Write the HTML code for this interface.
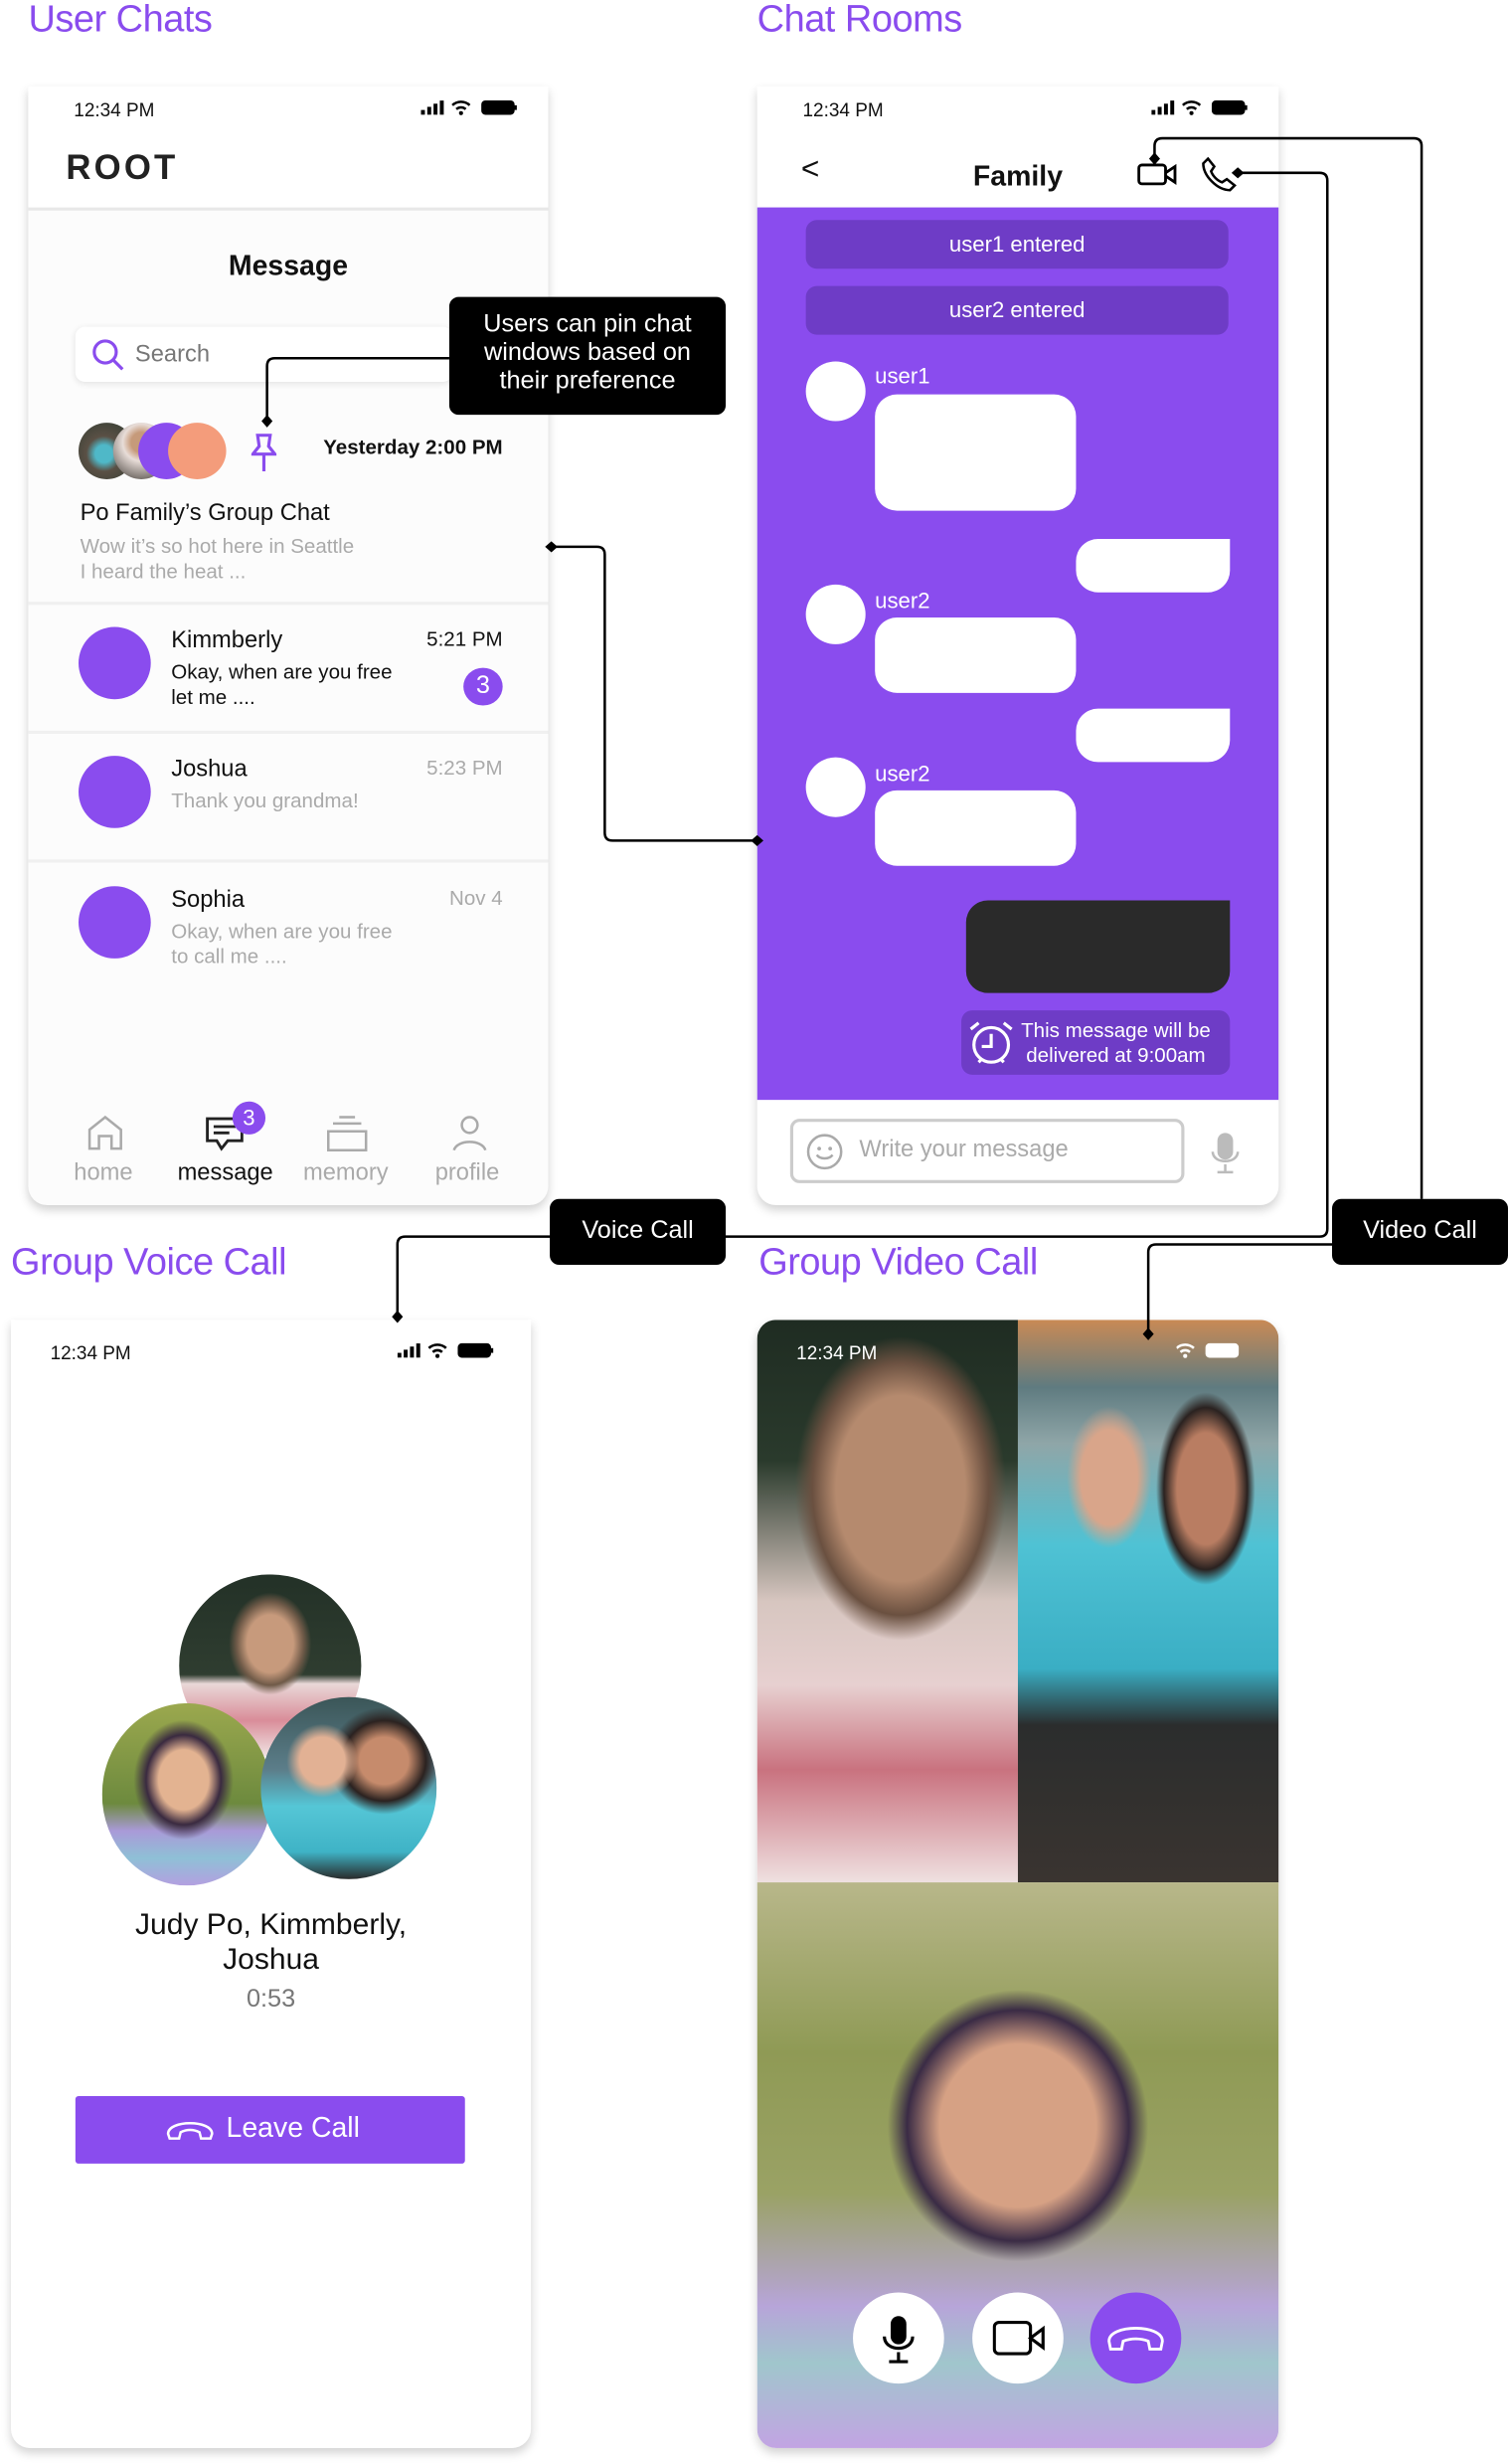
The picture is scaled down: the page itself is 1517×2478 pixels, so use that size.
<!DOCTYPE html>
<html><head><meta charset="utf-8">
<style>
*{margin:0;padding:0;box-sizing:border-box}
html,body{width:1517px;height:2478px;overflow:hidden;background:#fff}
#w{position:absolute;left:0;top:0;width:960px;height:1568px;transform:scale(1.5802);transform-origin:0 0;font-family:"Liberation Sans",sans-serif;color:#111}
.a{position:absolute}
.t{position:absolute;white-space:nowrap}
.title{font-size:24px;color:#8a4cee;font-weight:500;letter-spacing:-.3px}
.phone{position:absolute;background:#fff;box-shadow:0 3px 6px rgba(0,0,0,.18);border-radius:0 0 12px 12px}
.tip{position:absolute;background:#000;color:#fff;border-radius:6px;text-align:center;font-size:16px}
.circ{position:absolute;border-radius:50%}
.gray{color:#aaa}
.row{position:absolute;left:0;width:331px;height:1px;background:#eee}
.ban{position:absolute;left:31px;width:269px;height:31px;background:#6e3cc6;border-radius:7px;color:#fff;font-size:14px;text-align:center;line-height:31px}
.wb{position:absolute;background:#fff;border-radius:14px}
</style></head><body><div id="w">

<div class="t title" style="left:18px;top:-1px">User Chats</div>
<div class="t title" style="left:482px;top:-1px">Chat Rooms</div>
<div class="t title" style="left:7px;top:790px">Group Voice Call</div>
<div class="t title" style="left:483px;top:790px">Group Video Call</div>

<!-- Phone 1 -->
<div class="phone" style="left:18px;top:55px;width:331px;height:712px;background:#fcfcfc">
 <div class="a" style="left:0;top:0;width:331px;height:77px;background:#fff"></div>
 <div class="t" style="left:29px;top:8px;font-size:12px">12:34 PM</div>
 <svg class="a" style="left:250px;top:8px" width="62" height="12" viewBox="0 0 62 12"><rect x="0" y="7" width="2.5" height="3"/><rect x="4" y="5" width="2.5" height="5"/><rect x="8" y="3" width="2.5" height="7"/><rect x="12" y="1" width="2.5" height="9"/><path d="M20 4a8 8 0 0 1 11 0M22.5 6.5a4.5 4.5 0 0 1 6 0" stroke="#000" stroke-width="1.6" fill="none"/><circle cx="25.5" cy="9" r="1.3"/><rect x="39" y="1.5" width="20" height="8" rx="2" stroke="#000" stroke-width="1.2" fill="#000"/><rect x="59.5" y="4" width="1.5" height="3"/></svg>
 <div class="t" style="left:24px;top:39px;font-size:22px;font-weight:bold;letter-spacing:2px;color:#222">ROOT</div>
 <div class="a" style="left:0;top:77px;width:331px;height:2px;background:#e8e8e8"></div>
 <div class="t" style="left:0;width:331px;text-align:center;top:104px;font-size:18px;font-weight:bold">Message</div>
 <div class="a" style="left:30px;top:153px;width:240px;height:35px;background:#fff;border-radius:6px;box-shadow:0 1px 4px rgba(0,0,0,.1)"></div>
 <svg class="a" style="left:40px;top:160px" width="22" height="22" viewBox="0 0 22 22"><circle cx="9" cy="9" r="7" stroke="#8a4cee" stroke-width="2" fill="none"/><path d="M14 14l6 6" stroke="#8a4cee" stroke-width="2"/></svg>
 <div class="t" style="left:68px;top:162px;font-size:15px;color:#777">Search</div>
 <div class="circ" style="left:32px;top:214px;width:36px;height:36px;background:radial-gradient(circle at 45% 55%,#4fb8c8 0 20%,#5a5045 40%,#2d3a30)"></div>
 <div class="circ" style="left:54px;top:214px;width:36px;height:36px;background:radial-gradient(circle at 50% 35%,#c69a7a 0 22%,#e8ddd8 40%,#3a3530)"></div>
 <div class="circ" style="left:70px;top:214px;width:36px;height:36px;background:#8a4cee"></div>
 <div class="circ" style="left:89px;top:214px;width:37px;height:36px;background:#f49c7b"></div>
 <svg class="a" style="left:142px;top:221px" width="16" height="25" viewBox="0 0 16 25"><path d="M4 1h8l-1 7 4 5H1l4-5z M8 13v11" stroke="#8a4cee" stroke-width="2" fill="none"/></svg>
 <div class="t" style="right:29px;top:222px;font-size:13px;font-weight:bold">Yesterday 2:00 PM</div>
 <div class="t" style="left:33px;top:263px;font-size:15px;font-weight:500">Po Family’s Group Chat</div>
 <div class="t gray" style="left:33px;top:285px;font-size:13px;line-height:16px">Wow it’s so hot here in Seattle<br>I heard the heat ...</div>
 <div class="row" style="top:328px;height:2px;background:#f0f0f0"></div>
 <div class="circ" style="left:32px;top:344px;width:46px;height:46px;background:#8a4cee"></div>
 <div class="t" style="left:91px;top:344px;font-size:15px;font-weight:500">Kimmberly</div>
 <div class="t" style="left:91px;top:365px;font-size:13px;line-height:16px">Okay, when are you free<br>let me ....</div>
 <div class="t" style="right:29px;top:344px;font-size:13px">5:21 PM</div>
 <div class="circ" style="left:277px;top:370px;width:25px;height:24px;background:#8a4cee;color:#fff;font-size:16px;text-align:center;line-height:24px">3</div>
 <div class="row" style="top:410px;height:2px;background:#f0f0f0"></div>
 <div class="circ" style="left:32px;top:426px;width:46px;height:46px;background:#8a4cee"></div>
 <div class="t" style="left:91px;top:426px;font-size:15px;font-weight:500">Joshua</div>
 <div class="t gray" style="left:91px;top:447px;font-size:13px">Thank you grandma!</div>
 <div class="t gray" style="right:29px;top:426px;font-size:13px">5:23 PM</div>
 <div class="row" style="top:492px;height:2px;background:#f0f0f0"></div>
 <div class="circ" style="left:32px;top:509px;width:46px;height:46px;background:#8a4cee"></div>
 <div class="t" style="left:91px;top:509px;font-size:15px;font-weight:500">Sophia</div>
 <div class="t gray" style="left:91px;top:530px;font-size:13px;line-height:16px">Okay, when are you free<br>to call me ....</div>
 <div class="t gray" style="right:29px;top:509px;font-size:13px">Nov 4</div>
 <svg class="a" style="left:37px;top:654px" width="24" height="24" viewBox="0 0 24 24"><path d="M2 22V10l10-8 10 8v12h-6v-8H8v8z" stroke="#aaa" stroke-width="1.6" fill="none"/></svg>
 <svg class="a" style="left:113px;top:655px" width="26" height="24" viewBox="0 0 26 24"><path d="M1 2h22v14H14l-4 5-3-5H1z M5 7h14M5 11h10" stroke="#222" stroke-width="1.8" fill="none"/></svg>
 <div class="circ" style="left:130px;top:646px;width:21px;height:21px;background:#8a4cee;color:#fff;font-size:14px;text-align:center;line-height:21px">3</div>
 <svg class="a" style="left:190px;top:655px" width="26" height="24" viewBox="0 0 26 24"><path d="M8 1h10M4 5h18M1 10h24v12H1z" stroke="#aaa" stroke-width="1.6" fill="none"/></svg>
 <svg class="a" style="left:269px;top:654px" width="24" height="24" viewBox="0 0 24 24"><circle cx="12" cy="7" r="5" stroke="#aaa" stroke-width="1.6" fill="none"/><path d="M2 23c2-7 18-7 20 0" stroke="#aaa" stroke-width="1.6" fill="none"/></svg>
 <div class="t gray" style="left:29px;top:683px;font-size:15px">home</div>
 <div class="t" style="left:95px;top:683px;font-size:15px;color:#111">message</div>
 <div class="t gray" style="left:175px;top:683px;font-size:15px">memory</div>
 <div class="t gray" style="left:259px;top:683px;font-size:15px">profile</div>
</div>

<!-- Phone 2 -->
<div class="phone" style="left:482px;top:55px;width:332px;height:712px;overflow:hidden">
 <div class="t" style="left:29px;top:8px;font-size:12px">12:34 PM</div>
 <svg class="a" style="left:251px;top:8px" width="62" height="12" viewBox="0 0 62 12"><rect x="0" y="7" width="2.5" height="3"/><rect x="4" y="5" width="2.5" height="5"/><rect x="8" y="3" width="2.5" height="7"/><rect x="12" y="1" width="2.5" height="9"/><path d="M20 4a8 8 0 0 1 11 0M22.5 6.5a4.5 4.5 0 0 1 6 0" stroke="#000" stroke-width="1.6" fill="none"/><circle cx="25.5" cy="9" r="1.3"/><rect x="39" y="1.5" width="20" height="8" rx="2" stroke="#000" stroke-width="1.2" fill="#000"/><rect x="59.5" y="4" width="1.5" height="3"/></svg>
 <div class="t" style="left:28px;top:42px;font-size:20px">&lt;</div>
 <div class="t" style="left:0;width:332px;text-align:center;top:47px;font-size:18px;font-weight:bold">Family</div>
 <svg class="a" style="left:242px;top:46px" width="26" height="18" viewBox="0 0 26 18"><rect x="1" y="4" width="17" height="12" rx="2" stroke="#000" stroke-width="1.8" fill="none"/><path d="M18 9l6-4v10l-6-4" stroke="#000" stroke-width="1.8" fill="none"/></svg>
 <svg class="a" style="left:282px;top:44px" width="24" height="24" viewBox="0 0 24 24"><path d="M5 2l4 5-2 3c1 3 4 6 7 7l3-2 5 4-3 3C11 22 2 13 2 5z" stroke="#000" stroke-width="1.6" fill="none"/></svg>
 <div class="a" style="left:0;top:77px;width:332px;height:568px;background:#8a4cee"></div>
 <div class="ban" style="top:85px">user1 entered</div>
 <div class="ban" style="top:127px">user2 entered</div>
 <div class="circ" style="left:31px;top:175px;width:38px;height:38px;background:#fff"></div>
 <div class="t" style="left:75px;top:176px;font-size:14px;color:#fff">user1</div>
 <div class="wb" style="left:75px;top:196px;width:128px;height:74px"></div>
 <div class="wb" style="left:203px;top:288px;width:98px;height:34px;border-radius:14px 0 14px 14px"></div>
 <div class="circ" style="left:31px;top:317px;width:38px;height:38px;background:#fff"></div>
 <div class="t" style="left:75px;top:319px;font-size:14px;color:#fff">user2</div>
 <div class="wb" style="left:75px;top:338px;width:128px;height:48px"></div>
 <div class="wb" style="left:203px;top:396px;width:98px;height:34px;border-radius:14px 0 14px 14px"></div>
 <div class="circ" style="left:31px;top:427px;width:38px;height:38px;background:#fff"></div>
 <div class="t" style="left:75px;top:429px;font-size:14px;color:#fff">user2</div>
 <div class="wb" style="left:75px;top:448px;width:128px;height:48px"></div>
 <div class="a" style="left:133px;top:518px;width:168px;height:59px;background:#2a2a2a;border-radius:14px 0 14px 14px"></div>
 <div class="a" style="left:130px;top:588px;width:171px;height:41px;background:#6e3cc6;border-radius:7px"></div>
 <svg class="a" style="left:133px;top:593px" width="32" height="32" viewBox="0 0 32 32"><circle cx="16" cy="17" r="11" stroke="#fff" stroke-width="2" fill="none"/><path d="M16 10v8h-6M3 7l5-4M29 7l-5-4M8 28l2-2M24 28l-2-2" stroke="#fff" stroke-width="2" fill="none"/></svg>
 <div class="t" style="left:168px;top:593px;font-size:13px;color:#fff;line-height:16px;text-align:center">This message will be<br>delivered at 9:00am</div>
 <div class="a" style="left:21px;top:657px;width:251px;height:41px;border:2px solid #ccc;border-radius:6px"></div>
 <svg class="a" style="left:31px;top:666px" width="24" height="24" viewBox="0 0 24 24"><circle cx="12" cy="12" r="10.5" stroke="#aaa" stroke-width="1.6" fill="none"/><circle cx="8.5" cy="10" r="1.2" fill="#aaa"/><circle cx="15.5" cy="10" r="1.2" fill="#aaa"/><path d="M7 14c2 3 8 3 10 0" stroke="#aaa" stroke-width="1.6" fill="none"/></svg>
 <div class="t" style="left:65px;top:668px;font-size:15px;color:#aaa">Write your message</div>
 <svg class="a" style="left:288px;top:665px" width="20" height="28" viewBox="0 0 20 28"><rect x="5" y="1" width="10" height="17" rx="5" fill="#bbb"/><path d="M2 13c0 8 16 8 16 0M10 21v5M5 26h10" stroke="#bbb" stroke-width="1.6" fill="none"/></svg>
</div>

<!-- Phone 3 -->
<div class="phone" style="left:7px;top:840px;width:331px;height:718px">
 <div class="t" style="left:25px;top:14px;font-size:12px">12:34 PM</div>
 <svg class="a" style="left:246px;top:14px" width="62" height="12" viewBox="0 0 62 12"><rect x="0" y="7" width="2.5" height="3"/><rect x="4" y="5" width="2.5" height="5"/><rect x="8" y="3" width="2.5" height="7"/><rect x="12" y="1" width="2.5" height="9"/><path d="M20 4a8 8 0 0 1 11 0M22.5 6.5a4.5 4.5 0 0 1 6 0" stroke="#000" stroke-width="1.6" fill="none"/><circle cx="25.5" cy="9" r="1.3"/><rect x="39" y="1.5" width="20" height="8" rx="2" stroke="#000" stroke-width="1.2" fill="#000"/><rect x="59.5" y="4" width="1.5" height="3"/></svg>
 <div class="circ" style="left:107px;top:162px;width:116px;height:116px;background:radial-gradient(ellipse at 50% 38%,#c79a7c 0 18%,#6f5a48 26%,transparent 32%),linear-gradient(#233127 0,#2f3d30 55%,#e9d8d8 60%,#d98d99 80%,#f0e4e4)"></div>
 <div class="circ" style="left:58px;top:244px;width:108px;height:116px;background:radial-gradient(ellipse at 48% 42%,#e3b391 0 20%,#3a2a40 30%,transparent 40%),linear-gradient(#9ba84e,#6d8a3e 55%,#a99ad8 70%,#8fc0d6 85%,#b3a0e0)"></div>
 <div class="circ" style="left:159px;top:240px;width:112px;height:116px;background:radial-gradient(ellipse at 35% 35%,#e2b194 0 14%,transparent 22%),radial-gradient(ellipse at 70% 35%,#c68b6c 0 14%,#2b2220 24%,transparent 32%),linear-gradient(#3b5658,#5c7e8a 40%,#55c6d6 60%,#3fb3c6 85%,#2a2a2a)"></div>
 <div class="t" style="left:0;width:331px;text-align:center;top:375px;font-size:19px;line-height:22px">Judy Po, Kimmberly,<br>Joshua</div>
 <div class="t" style="left:0;width:331px;text-align:center;top:424px;font-size:16px;color:#777">0:53</div>
 <div class="a" style="left:41px;top:494px;width:248px;height:43px;background:#8a4cee;border-radius:2px"></div>
 <svg class="a" style="left:98px;top:506px" width="32" height="20" viewBox="0 0 32 20"><path d="M2 12c0-9 28-9 28 0l-1 3h-6l-1-4c-4-2-8-2-12 0l-1 4H3z" stroke="#fff" stroke-width="1.6" fill="none"/></svg>
 <div class="t" style="left:137px;top:504px;font-size:18px;color:#fff">Leave Call</div>
</div>

<!-- Phone 4 -->
<div class="phone" style="left:482px;top:840px;width:332px;height:718px;border-radius:12px;overflow:hidden">
 <div class="a" style="left:0;top:0;width:166px;height:358px;background:radial-gradient(ellipse 45% 30% at 55% 30%,#b58a6e 0 55%,#6a5040 75%,transparent 90%),linear-gradient(#1f2c22 0,#2a3a2c 25%,#d7c6c0 50%,#e7d0d0 65%,#c9727f 80%,#efe0e0)"></div>
 <div class="a" style="left:166px;top:0;width:166px;height:358px;background:radial-gradient(ellipse 18% 14% at 35% 28%,#d9a58a 0 60%,transparent 90%),radial-gradient(ellipse 20% 18% at 72% 30%,#b97d62 0 55%,#2a2220 80%,transparent 95%),linear-gradient(#c98a55 0,#5f7b80 12%,#8fa6a8 22%,#4fc2d4 40%,#3aaec4 62%,#2b2d2d 72%,#3a3430)"></div>
 <div class="a" style="left:0;top:358px;width:332px;height:360px;background:radial-gradient(ellipse 25% 24% at 50% 43%,#d6a184 0 60%,#3a2b45 85%,transparent 100%),linear-gradient(#b8b78a 0,#8f9a55 30%,#9aa265 55%,#b7a5d9 75%,#a0c6cc 85%,#c2a4e3)"></div>
 <div class="t" style="left:25px;top:14px;font-size:12px;color:#fff">12:34 PM</div>
 <svg class="a" style="left:267px;top:14px" width="42" height="12" viewBox="0 0 42 12"><path d="M0 4a8 8 0 0 1 11 0M2.5 6.5a4.5 4.5 0 0 1 6 0" stroke="#fff" stroke-width="1.6" fill="none"/><circle cx="5.5" cy="9" r="1.3" fill="#fff"/><rect x="19" y="1.5" width="20" height="8" rx="2" stroke="#fff" stroke-width="1.2" fill="#fff"/></svg>
 <div class="circ" style="left:61px;top:619px;width:58px;height:58px;background:#fff"></div>
 <svg class="a" style="left:78px;top:633px" width="24" height="32" viewBox="0 0 24 32"><rect x="7" y="1" width="10" height="18" rx="5"/><path d="M3 14c0 10 18 10 18 0M12 24v6M6 30h12" stroke="#000" stroke-width="2" fill="none"/></svg>
 <div class="circ" style="left:137px;top:619px;width:58px;height:58px;background:#fff"></div>
 <svg class="a" style="left:150px;top:637px" width="34" height="22" viewBox="0 0 34 22"><rect x="1" y="1" width="23" height="20" rx="3" stroke="#000" stroke-width="2" fill="none"/><path d="M24 11l8-6v12z" stroke="#000" stroke-width="2" fill="none"/></svg>
 <div class="circ" style="left:212px;top:619px;width:58px;height:58px;background:#8a4cee"></div>
 <svg class="a" style="left:222px;top:638px" width="38" height="20" viewBox="0 0 38 20"><path d="M2 12c0-11 34-11 34 0l-1 5h-7l-1-5c-5-2-11-2-16 0l-1 5H3z" stroke="#fff" stroke-width="1.8" fill="none"/></svg>
</div>

<!-- connectors -->
<svg class="a" style="left:0;top:0" width="960" height="1568" viewBox="0 0 960 1568">
 <g fill="none" stroke="#000" stroke-width="1.6">
  <path d="M286 228H175q-5 0-5 5V268"/>
  <path d="M351 348H380q5 0 5 5V530q0 5 5 5H482"/>
  <path d="M735 101V93q0-5 5-5H900q5 0 5 5V763"/>
  <path d="M788 110H840q5 0 5 5V782q0 5-5 5H258q-5 0-5 5V838"/>
  <path d="M848 792H736q-5 0-5 5V849"/>
 </g>
 <g fill="#000">
  <path d="M170 264l3.5 4-3.5 4-3.5-4z"/>
  <path d="M347 348l4-3.5 4 3.5-4 3.5z"/>
  <path d="M478 535l4-3.5 4 3.5-4 3.5z"/>
  <path d="M735 97l3.5 4-3.5 4-3.5-4z"/>
  <path d="M784 110l4-3.5 4 3.5-4 3.5z"/>
  <path d="M253 834l3.5 4-3.5 4-3.5-4z"/>
  <path d="M731 845l3.5 4-3.5 4-3.5-4z"/>
 </g>
</svg>

<div class="tip" style="left:286px;top:189px;width:176px;height:75px;padding-top:9px;line-height:18px">Users can pin chat<br>windows based on<br>their preference</div>
<div class="tip" style="left:350px;top:763px;width:112px;height:42px;line-height:42px">Voice Call</div>
<div class="tip" style="left:848px;top:763px;width:112px;height:42px;line-height:42px">Video Call</div>

</div></body></html>
